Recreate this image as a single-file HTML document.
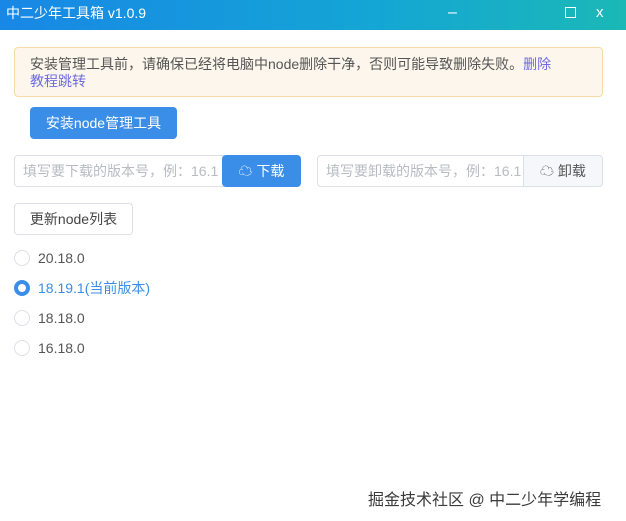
<!DOCTYPE html>
<html><head><meta charset="utf-8"><style>
*{box-sizing:border-box;margin:0;padding:0}
body{width:626px;height:521px;overflow:hidden;background:#fff;font-family:"Liberation Sans","Noto Sans CJK SC",sans-serif;font-size:14px;color:#606266;position:relative}
.tb{height:30px;background:linear-gradient(90deg,#1887e6,#14a6d4 60%,#1bb8b6);color:#fff;font-size:14px;line-height:26px;padding-left:6px;position:relative}
.tb span{position:absolute;top:0}
.a{position:absolute}
.alert{left:14px;top:47px;width:589px;height:50px;background:#fdf6ec;border:1px solid #f6dba8;border-radius:4px;padding:8px 15px;line-height:17px;color:#555;font-size:14px}
.alert b{font-weight:normal;color:#6c6ce0}
.btn{border-radius:4px;text-align:center;font-size:14px}
.inp{border:1px solid #dcdfe6;border-radius:4px 0 0 4px;color:#b8bbc2;padding-left:8px;line-height:30px;height:32px;overflow:hidden;white-space:nowrap;font-size:14px}
.r{position:absolute;left:14px;width:16px;height:16px;border:1px solid #dcdfe6;border-radius:50%}
.t{position:absolute;left:38px;font-size:14px;color:#555;line-height:16px}
</style></head><body>
<div class="tb">中二少年工具箱 v1.0.9<span style="left:448px;font-size:16px">–</span><span style="left:565px;top:7px;width:11px;height:11px;border:1.5px solid #fff"></span><span style="left:596px;font-size:15px">x</span></div>
<div class="a alert">安装管理工具前，请确保已经将电脑中node删除干净，否则可能导致删除失败。<b>删除<br>教程跳转</b></div>
<div class="a btn" style="left:30px;top:107px;width:147px;height:32px;line-height:32px;background:#3a8ee8;color:#fff">安装node管理工具</div>
<div class="a inp" style="left:14px;top:155px;width:210px">填写要下载的版本号，例：16.1</div>
<div class="a btn" style="left:222px;top:155px;width:79px;height:32px;line-height:32px;background:#3a8ee8;color:#fff;font-size:14px">☁ 下载</div>
<div class="a inp" style="left:317px;top:155px;width:208px">填写要卸载的版本号，例：16.1</div>
<div class="a btn" style="left:523px;top:155px;width:80px;height:32px;line-height:30px;background:#f5f7fa;border:1px solid #dcdfe6;border-radius:0 4px 4px 0;color:#555;font-size:14px">☁ 卸载</div>
<div class="a btn" style="left:14px;top:203px;width:119px;height:32px;line-height:30px;border:1px solid #dcdfe6;color:#444">更新node列表</div>
<div class="r" style="top:250px"></div><div class="t" style="top:250px">20.18.0</div>
<div class="r" style="top:280px;border:4px solid #3a8ee8"></div><div class="t" style="top:280px;color:#3a8ee8">18.19.1(当前版本)</div>
<div class="r" style="top:310px"></div><div class="t" style="top:310px">18.18.0</div>
<div class="r" style="top:340px"></div><div class="t" style="top:340px">16.18.0</div>
<div class="a" style="left:368px;top:486px;font-size:16px;color:#3a3a3a">掘金技术社区 @ 中二少年学编程</div>
</body></html>
